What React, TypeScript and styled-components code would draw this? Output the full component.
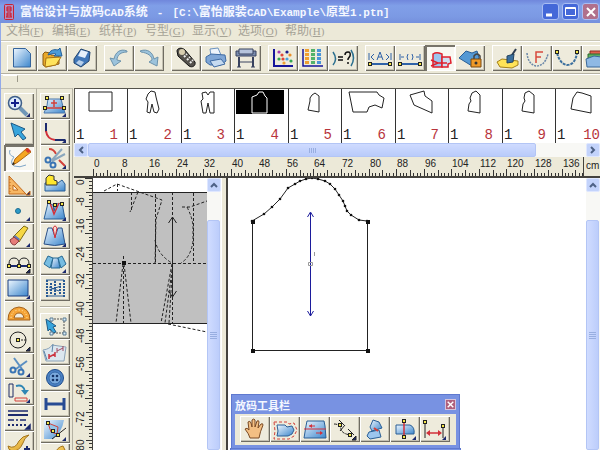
import React from 'react';
import styled, { createGlobalStyle, css } from 'styled-components';

const Global = createGlobalStyle`
  * { box-sizing: border-box; }
  body {
    margin: 0;
    overflow: hidden;
    background: #ece9d8;
    font-family: "Liberation Sans", "Noto Sans CJK SC", sans-serif;
    font-size: 12px;
  }
  button { font: inherit; padding: 0; margin: 0; }
`;

const face = '#ece9d8';
const navy = '#1c2a6e';

/* ---------- frame ---------- */

const Window = styled.div`
  display: flex;
  flex-direction: column;
  height: 100vh;
  overflow: hidden;
  background: ${face};
`;

const TitleBar = styled.header`
  display: flex;
  align-items: center;
  flex: none;
  height: 23px;
  padding: 0 1px 0 4px;
  gap: 6px;
  background: linear-gradient(#7087dc, #809fe8 25%, #7c9ae4 70%, #7590dd);
`;

const Title = styled.h1`
  display: flex;
  align-items: baseline;
  flex: 1;
  gap: 9px;
  margin: 0;
  overflow: hidden;
  white-space: nowrap;
  color: #f4f7ff;
  font: bold 12px/18px "Noto Sans CJK SC", sans-serif;
`;

const Mono = styled.span`
  font-family: "Liberation Mono", monospace;
  font-size: 11px;
`;

const Caption = styled.div`
  display: flex;
  gap: 3px;
`;

const CaptionButton = styled.button<{ $close?: boolean }>`
  display: grid;
  place-items: center;
  width: 17px;
  height: 17px;
  border: 1px solid #a9bdf3;
  border-radius: 3px;
  background: ${p => (p.$close ? '#b0708c' : '#4468d8')};
`;

const Client = styled.div`
  display: flex;
  flex-direction: column;
  flex: 1;
  min-height: 0;
  border-left: 1px solid #93aaea;
`;

const MenuBar = styled.nav`
  display: grid;
  grid-auto-flow: column;
  grid-auto-columns: 46px 47px;
  justify-content: start;
  flex: none;
  height: 18px;
  padding-left: 5px;
  border-bottom: 1px solid #c9c6b6;
`;

const MenuItem = styled.button`
  border: 0;
  background: none;
  text-align: left;
  white-space: nowrap;
  color: #a5a296;
  font: 12px/17px "Liberation Serif", "Noto Sans CJK SC", serif;
`;

const Key = styled.span`
  font-size: 11px;
`;

const ToolBar = styled.div`
  display: flex;
  flex: none;
  gap: 7px;
  height: 33px;
  padding: 3px 0 0 6px;
  overflow: hidden;
  border-top: 1px solid #fff;
  border-bottom: 1px solid #b4b1a2;
`;

const Group = styled.div`
  display: flex;
  flex: none;
`;

const ToolButton = styled.button<{ $on?: boolean }>`
  display: block;
  flex: none;
  width: 30px;
  height: 26px;
  border: 0;
  background: ${p => (p.$on ? '#f8f7f1' : '#eeebdc')};
  box-shadow: ${p =>
    p.$on
      ? 'inset 2px 2px 0 #77746a, inset -1px -1px 0 #fff'
      : 'inset 1px 1px 0 #fff, inset -1px -1px 0 #6f6c62, inset -2px -2px 0 #c4c1b2'};
  svg { display: block; }
`;

const DockStrip = styled.div`
  flex: none;
  height: 14px;
  padding-left: 2px;
  border-top: 1px solid #fff;
`;

const DockHandle = styled.div`
  width: 15px;
  height: 7px;
  border-right: 1px solid #9c998a;
  border-top: 1px solid #fff;
`;

const Body = styled.div`
  display: flex;
  flex: 1;
  min-height: 0;
`;

const ToolColumn = styled.div`
  display: flex;
  flex-direction: column;
  flex: none;
  padding: 4px 2px 0 3px;
  overflow: hidden;
  border-right: 1px solid #b4b1a2;
  border-top: 1px solid #c4c1b2;
`;

const ColumnRule = styled.hr`
  flex: none;
  width: 30px;
  height: 2px;
  margin: 5px 0;
  border: 0;
  border-top: 1px solid #b4b1a2;
  border-bottom: 1px solid #fff;
`;

const Workspace = styled.main`
  display: flex;
  flex-direction: column;
  flex: 1;
  min-width: 0;
  padding-left: 1px;
`;

/* ---------- piece list ---------- */

const PieceList = styled.div`
  display: grid;
  grid-auto-flow: column;
  grid-auto-columns: 53px 54px;
  flex: none;
  height: 55px;
  overflow: hidden;
  border-top: 1px solid #55534c;
  border-left: 1px solid #55534c;
  background: #fff;
`;

const Piece = styled.button`
  display: flex;
  flex-direction: column;
  justify-content: space-between;
  border: 0;
  border-right: 1px solid #333;
  background: #fff;
`;

const PieceNumbers = styled.span`
  display: flex;
  justify-content: space-between;
  width: 100%;
  padding: 0 9px 0 1px;
  color: #222;
  font: 14px/16px "Liberation Mono", monospace;
`;

const Index = styled.span`
  color: #b8343c;
`;

/* ---------- scroll bars ---------- */

const Scroll = styled.div<{ $vertical?: boolean }>`
  display: flex;
  flex: none;
  flex-direction: ${p => (p.$vertical ? 'column' : 'row')};
  ${p => (p.$vertical ? 'width: 14px;' : 'height: 14px;')}
  background: #f8f8f5;
`;

const ScrollButton = styled.button`
  display: grid;
  place-items: center;
  flex: none;
  width: 14px;
  height: 14px;
  border: 1px solid #dfe7ff;
  border-radius: 2px;
  background: #c3d3fb;
`;

const Track = styled.div<{ $vertical?: boolean }>`
  display: flex;
  flex: 1;
  min-height: 0;
  ${p => p.$vertical && css`padding-top: 28px;`}
`;

const Thumb = styled.div<{ $vertical?: boolean }>`
  display: grid;
  place-items: center;
  border: 1px solid #b3c5f5;
  border-radius: 2px;
  ${p =>
    p.$vertical
      ? css`width: 13px; flex: none; background: linear-gradient(90deg, #d0dcff, #bccdfb);`
      : css`width: 90%; background: linear-gradient(#cfdbff, #b9cbfa);`}
`;

/* ---------- canvas ---------- */

const RulerRow = styled.div`
  display: flex;
  flex: none;
  height: 21px;
  border-bottom: 2px solid #44423d;
`;

const RulerScale = styled.div`
  flex: 1;
  min-width: 0;
  overflow: hidden;
`;

const Unit = styled.div`
  flex: none;
  width: 17px;
  padding: 3px 0 0 2px;
  border-left: 1px solid #44423d;
  font: 10px/12px "Liberation Sans", sans-serif;
  color: #222;
`;

const Views = styled.div`
  display: flex;
  flex: 1;
  min-height: 0;
`;

const SideRuler = styled.div`
  flex: none;
  width: 19px;
  overflow: hidden;
  border-right: 1px solid #44423d;
`;

const LeftView = styled.section`
  flex: none;
  overflow: hidden;
  background: #fff;
  svg { display: block; }
`;

const Splitter = styled.div`
  flex: none;
  width: 5px;
  border-left: 1px solid #fff;
  background: ${face};
`;

const RightView = styled.section`
  position: relative;
  flex: 1;
  min-width: 0;
  overflow: hidden;
  border-left: 2px solid #44423d;
  background: #fff;
`;

const Palette = styled.div<{ $next?: boolean }>`
  position: absolute;
  left: ${p => (p.$next ? 2 : 3)}px;
  top: ${p => (p.$next ? 270 : 216)}px;
  padding: 0 3px 3px;
  border: 1px solid #5f79cf;
  background: #7892e2;
  ${p => p.$next && css`width: 231px; height: 20px;`}
`;

const PaletteHead = styled.div`
  display: flex;
  align-items: center;
  justify-content: space-between;
  height: 19px;
  color: #f4f7ff;
  font: bold 11px/18px "Noto Sans CJK SC", sans-serif;
`;

const PaletteClose = styled.button`
  display: grid;
  place-items: center;
  width: 11px;
  height: 11px;
  border: 1px solid #d5c4dc;
  background: #b0607c;
`;

const PaletteTools = styled.div`
  display: flex;
  padding: 2px 6px 3px 5px;
  background: ${face};
`;

/* ---------- icons ---------- */

const B = 'url(#blue)';
const Y = 'url(#gold)';
const corner = <path d="M26 20v4h-4z" fill={navy} />;
const node = (x: number, y: number) => (
  <rect key={`${x}-${y}`} x={x - 1.5} y={y - 1.5} width="3" height="3" fill="#f7e84a" stroke="#222" />
);
const scissors = (
  <g fill="none" stroke="#3a74b4" strokeWidth="2">
    <path d="M10 5l8 11M23 8l-11 8" stroke="#5b8fc2" />
    <circle cx="9" cy="17" r="2.5" />
    <circle cx="17" cy="19" r="2.5" />
  </g>
);

const art: Record<string, React.ReactNode> = {
  New: <path d="M6.500 3.500h12l5 5v13.500h-17z" fill={B} stroke="#35649c" />,
  Open: (
    <g strokeLinejoin="round">
      <path d="M6 9l2-2 5 1 1 2 8 1v8L9 22 6 20z" fill="#e9a92a" stroke="#8a5a10" />
      <path d="M9 13l15-1-5 8L8 22z" fill="#ffe35c" stroke="#a87314" />
      <path d="M11 10c2-5 6-6 10-5l2-2 2 8-8 0 2-2c-3-1-5 0-8 1z" fill="#4b9cd8" stroke="#235f9a" />
    </g>
  ),
  Save: (
    <g>
      <path d="M7 14l7-10 9 3-1 9-8 6-7-4z" fill="#4077b8" stroke="#23456f" />
      <path d="M14 5l7 2-3 6-7-2z" fill="#e6f0fa" />
      <path d="M12 15l5 2-3 4-5-3z" fill="#b8d0ea" />
    </g>
  ),
  Undo: <path d="M23 6C16 3 11 8 10 14l-4-1 4 8 7-5-4-1c0-5 4-8 10-8z" fill="#9cc3dc" stroke="#6d93ac" />,
  Redo: <path d="M6 6c8-3 13 2 14 8l4-2-1 9-8-4 3-2c0-4-4-7-11-8z" fill="#9cc3dc" stroke="#6d93ac" />,
  Measure: (
    <g>
      <path d="M6 6c0-3 5-4 8-1l10 12c1 4-3 6-6 4L7 11z" fill="#55524d" stroke="#111" />
      <circle cx="11" cy="7" r="3" fill="#d8ceb0" />
      <path d="M13 12l3-3M16 15l3-3M19 18l3-3" stroke="#eee" strokeWidth="2" strokeDasharray="2 1" />
    </g>
  ),
  Print: (
    <g>
      <path d="M10 11l-1-7 8-1 3 7z" fill="#eef4fb" stroke="#6c93bf" />
      <path d="M5 12l5-3 14 1 1 6-5 4H9l-4-3z" fill="#7fa6d6" stroke="#3f6ba3" />
      <path d="M9 16l11-2 4 5-11 3z" fill="#c6dbf0" stroke="#3f6ba3" />
    </g>
  ),
  Plot: (
    <g stroke="#38425e">
      <path d="M5 6h20v5H5z" fill="#7a8db0" />
      <path d="M8 4h14v5H8z" fill="#b6c4dc" />
      <path d="M8 12v10M22 12v10" strokeWidth="2" />
      <path d="M8 17h14M6 22h4M20 22h4" />
    </g>
  ),
  Points: (
    <g>
      <path d="M6 4v17h19" fill="none" stroke="#15159a" strokeWidth="2" />
      {[[11, 7, '#a33bb0'], [19, 7, '#1b1b8a'], [14, 10, '#e0483c'], [22, 10, '#e9902a'], [11, 14, '#32a852'], [15, 14, '#e0483c'], [19, 14, '#4aa3e0'], [16, 18, '#f0a030'], [23, 16, '#32a852']].map(
        ([x, y, c]) => <circle key={`${x}-${y}`} cx={x} cy={y} r="1.600" fill={c as string} />,
      )}
    </g>
  ),
  Table: (
    <g>
      <path d="M5 4v17h20" fill="none" stroke="#15159a" strokeWidth="1.500" />
      {['#f0a030', '#53b26a', '#4a94d8'].map((c, i) => (
        <path key={c} d={`M${9 + i * 6} 4v15`} stroke={c} strokeWidth="4" strokeDasharray="3 1" />
      ))}
    </g>
  ),
  Formula: (
    <g fill="none">
      <path d="M5 7q5 7 0 13M23 5q5 8 0 16" stroke="#2b6f8f" strokeWidth="1.500" />
      <path d="M10 12h5M10 15h5M17 10q0-3 3-3t2 4l-2 3v1M20 17v2" stroke="#111" strokeWidth="1.500" />
    </g>
  ),
  Width: (
    <g stroke="#2f62a8" fill="none">
      <path d="M4 8v7M26 8v7M6 12l3-3M6 12l3 3M24 12l-3-3M24 12l-3 3M12 15l3-8 3 8M13 12h4" />
      <path d="M5 19h20" strokeWidth="2" />
      {node(5, 19)}{node(25, 19)}
    </g>
  ),
  Gap: (
    <g stroke="#2f62a8" fill="none">
      <path d="M5 9v6M25 9v6M6 12h3M21 12h3M13 9q-2 3 0 6M17 9q2 3 0 6" />
      <path d="M5 19h20" strokeWidth="2" />
      {node(5, 19)}{node(25, 19)}
    </g>
  ),
  Sleeve: (
    <g stroke="#e0202c" strokeWidth="1.500">
      <path d="M8 22V9q3-2 6-1l3 1v13z" fill="#9cc6ee" />
      <path d="M17 22v-10h8l1 6-3 1v3z" fill="#cfe0f2" />
      <path d="M6 15l7 3-7 3M13 18h9" fill="none" />
    </g>
  ),
  Lock: (
    <g>
      <path d="M4 13L11 6l6 2 5-2 2 7-7 8z" fill="#5599d4" stroke="#2a5f96" />
      <path d="M19 14v-3q3-4 6 0v3" fill="none" stroke="#444" strokeWidth="1.500" />
      <path d="M16 14h10v8H16z" fill="#f09a28" stroke="#7a4a10" />
      <circle cx="21" cy="18" r="1.500" fill="#333" />
    </g>
  ),
  Brush: (
    <g>
      <path d="M5 17l5-3 8 1 8 1v4l-6 3-12-1z" fill="#ffe357" stroke="#a4801a" />
      <path d="M24 4l-4 6" stroke="#2e3d50" strokeWidth="2" />
      <path d="M15 11l7-2-1 8-6 1z" fill="#3a6f9e" stroke="#23425f" />
    </g>
  ),
  Notch: (
    <g fill="none" strokeWidth="1.500">
      <path d="M5 8q1 11 9 13 9 0 12-12" stroke="#6a87a8" strokeDasharray="2 1" />
      <path d="M14 18V7h7M14 12h5" stroke="#d84a3c" />
    </g>
  ),
  Curve: (
    <g fill="none" stroke="#333">
      <path d="M5 8q3 11 10 12 8 0 10-12" stroke="#3a6f9e" strokeWidth="2" strokeDasharray="3 1" />
      {node(5, 7)}{node(25, 7)}
    </g>
  ),
  Layers: (
    <g>
      <path d="M8 6h18v7H8z" fill="#e2604c" stroke="#8a2f22" />
      <path d="M6 9h20v8H6z" fill="#5fae62" stroke="#2c6a30" />
      <path d="M4 14l8-3 14 2v9H5z" fill="#8fb9e4" stroke="#3a689a" />
    </g>
  ),
  Zoom: (
    <g>
      <path d="M16 15l7 7" stroke="#6f96b8" strokeWidth="4" />
      <circle cx="11" cy="10" r="6.500" fill="#dcebfb" stroke="#3f5f8a" strokeWidth="1.500" />
      <path d="M11 6v8M7 10h8" stroke="#111f8a" strokeWidth="2" />
      {corner}
    </g>
  ),
  Select: <path d="M7 4l14 6-4 3 5 6-3 2-5-6-3 3z" fill="#38a5dc" stroke="#1e5a86" />,
  Pencil: (
    <g>
      <path d="M6 5q-2 5 4 7-5 6 0 9 6 2 12-1" fill="none" stroke="#7fa6c8" />
      <path d="M23 3l4 4-13 10-5 3 2-6z" fill="#f4a621" stroke="#b0660f" />
      <path d="M24 3l3 3-3 2-3-3z" fill="#d83a2c" />
      <path d="M8 20l1-3 2 2z" fill="#222" />
    </g>
  ),
  SetSquare: (
    <g fill="none" stroke="#c26a1c">
      <path d="M5 5l17 18H5z" fill="#f7b765" />
      <path d="M9 14l5 5H9z" fill="#fff3de" />
      <path d="M6 8v14" strokeDasharray="1 2" />
      {corner}
    </g>
  ),
  Point: <g><circle cx="14" cy="14" r="2.500" fill="#2c9bc8" stroke="#1d6d92" />{corner}</g>,
  Eraser: (
    <g>
      <path d="M9 14L20 3l4 2-9 14z" fill="#f6d743" stroke="#7c6a18" />
      <path d="M11 12l5 4-2 3-5-4z" fill="#5d79c0" />
      <path d="M6 17l4-3 5 4-4 4q-4 0-5-5z" fill="#e67c78" stroke="#8c3c40" />
      {corner}
    </g>
  ),
  Divide: (
    <g fill="none" stroke="#222">
      <path d="M5 15q0-6 5-6t5 6q0-6 5-6t5 6" />
      <path d="M5 17h20" stroke={navy} strokeWidth="2" />
      {node(5, 17)}{node(15, 17)}{node(25, 17)}{corner}
    </g>
  ),
  Rect: <g><path d="M4 5h20v16H4z" fill={B} stroke="#1a3f80" />{corner}</g>,
  Protractor: (
    <g>
      <path d="M4 19q0-12 11-13 11 1 11 13z" fill="#f5a437" stroke="#a3601a" />
      <path d="M10 17q1-5 5-5t5 5z" fill="#f1eee0" stroke="#a3601a" />
      <path d="M7 17q1-8 8-8t8 8" fill="none" stroke="#fff0c0" strokeDasharray="1 2" />
    </g>
  ),
  Circle: (
    <g fill="none" stroke="#222">
      <circle cx="14" cy="13" r="8" />
      <path d="M14 13h8" strokeDasharray="2 1" />
      {node(14, 13)}{corner}
    </g>
  ),
  Cut: <g>{scissors}{corner}</g>,
  Rotate: (
    <g fill="none">
      <path d="M5 5h4v13H5z" stroke="#1e2d66" />
      <path d="M11 19h12v3H11z" stroke="#d2403a" />
      <path d="M12 7q8-2 9 6" stroke="#2f86b4" strokeWidth="2" />
      <path d="M17 11h8l-4 5z" fill="#2f86b4" />
      {corner}
    </g>
  ),
  Lines: (
    <g stroke={navy} strokeWidth="1.500">
      <path d="M4 6h20" /><path d="M4 10h20" strokeWidth="2" />
      <path d="M4 15h20" strokeDasharray="6 2 2 2" />
      <path d="M4 20h18" strokeWidth="2" strokeDasharray="2 2" />
      {corner}
    </g>
  ),
  Hem: (
    <g>
      <path d="M4 15q7 4 11-5 3-5 10-6-5 3-6 8-4 9-11 8-4-1-4-5z" fill={Y} stroke="#a5751c" />
      <path d="M20 18h6M23 15v6" stroke={navy} strokeWidth="2" />
    </g>
  ),
  Piece: (
    <g>
      <path d="M8 6h13q2 8 4 14H4Q8 12 8 6z" fill={B} stroke="#4a77ad" />
      <path d="M7 15h16M14 7v7M11 10h6" stroke="#d2403a" strokeWidth="1.500" />
      {node(7, 5)}{node(22, 5)}{node(5, 15)}{node(24, 15)}{corner}
    </g>
  ),
  Corner: (
    <g fill="none" strokeWidth="2">
      <path d="M6 4v9M15 21h10" stroke={navy} /><path d="M6 12q1 8 9 9" stroke="#d2303a" />{corner}
    </g>
  ),
  CutPiece: (
    <g>
      <path d="M9 4q5 0 7 5M19 15l6 6" fill="none" stroke="#d2403a" strokeWidth="2" />
      <g fill="none" stroke="#3a74b4" strokeWidth="2">
        <path d="M22 4L12 15M25 9L12 16" stroke="#8ba7bd" />
        <circle cx="8" cy="15" r="2.500" />
        <circle cx="13" cy="20" r="2.500" />
      </g>
      {corner}
    </g>
  ),
  Seam: (
    <g>
      <path d="M5 12h13l4-3 3 4v7H5z" fill={B} stroke="#2a5f96" />
      <path d="M6 14V7l3-3 5 1v4l3 1v4z" fill="#ffe72e" stroke="#333" />
    </g>
  ),
  Dart: (
    <g>
      <path d="M8 6l5 2 1 6 2-7 6-1 3 16H4z" fill={B} stroke="#2a5f96" />
      <path d="M10 6l4 11 5-11" fill="none" stroke="#d2303a" strokeWidth="1.500" />
      {node(9, 5)}{node(15, 8)}{node(22, 7)}{corner}
    </g>
  ),
  DartClose: (
    <g>
      <path d="M8 5h4l3 9 3-9h4l3 16q-10 3-21 0z" fill={B} stroke="#2a4f86" />
      <path d="M13 5q2-4 4 0l-2 10z" fill="#f7dcd4" stroke="#d2303a" />
      {corner}
    </g>
  ),
  Flare: (
    <g strokeLinejoin="round">
      <path d="M4 15l4-8 5 2-3 10z" fill="#77bde2" stroke="#276a94" />
      <path d="M13 9h5l2 10h-9z" fill={B} stroke="#276a94" />
      <path d="M18 9l4-2 4 8-5 4z" fill="#77bde2" stroke="#276a94" />
      {corner}
    </g>
  ),
  Pleat: (
    <g stroke="#285a94" strokeWidth="2" fill="none">
      <path d="M7 5v17M24 5v17M11 8v12M15 6v15M20 8v12" strokeDasharray="2 1" />
      <path d="M6 5h18M6 21h18M9 12l10 4M9 15l12-4" strokeWidth="1" />
    </g>
  ),
  Modify: (
    <g fill="none" stroke="#555">
      <path d="M11 6h13v14H11z" strokeDasharray="2 1" />
      <path d="M6 6l10 7-3 1 3 5-3 1-3-4-2 2z" fill="#38a5dc" stroke="#1e5a86" />
      <path d="M10 5h3v3h-3zM23 5h3v3h-3zM10 19h3v3h-3zM23 19h3v3h-3z" fill="#d7ecf8" stroke="#5a7a92" />
    </g>
  ),
  Grain: (
    <g>
      <path d="M3 11q7-1 9-5l14 2-2 14H6z" fill="#dce7ef" stroke="#8aa2b8" />
      <path d="M13 5l-1 8M4 12l3 9" stroke="#5e86aa" fill="none" />
      <path d="M9 18l6-3M9 15v5M15 13v5" stroke="#cc3542" strokeWidth="1.500" />
      <path d="M17 12l6-3M17 9v5M23 7v5" stroke="#a04a60" />
    </g>
  ),
  Button: (
    <g>
      <circle cx="15" cy="13" r="8.500" fill="#4b82c4" stroke="#1d4b8c" />
      <circle cx="15" cy="13" r="6" fill="#79a9dc" stroke="#3568a8" />
      {[[13, 11], [17, 11], [13, 15], [17, 15]].map(([x, y]) => <circle key={`${x}${y}`} cx={x} cy={y} r="1.300" fill="#143468" />)}
    </g>
  ),
  Buttonhole: <path d="M6 7v12M24 7v12M6 13h18" stroke="#274b94" strokeWidth="3" />,
  Fill: (
    <g>
      <path d="M4 3h20q-2 12-11 19H4z" fill={B} />
      <path d="M8 6l10 4-1 7-6-2z" fill="#94c6ea" stroke="#d2403a" />
      <path d="M12 22l14-11" stroke="#222" />
      {node(8, 6)}{node(13, 14)}{node(18, 18)}{corner}
    </g>
  ),
  Ribbon: <path d="M4 20q8 0 11-9 2-7 8-8l2 4q-5 1-7 8-3 9-10 10z" fill={Y} stroke="#a5751c" />,
  Hand: (
    <path
      d="M10 22q-1-4-5-9 2-2 4 1L8 6q2-2 3 1l1 4V4q2-2 3 0v7l2-6q2-1 2 1l-1 6 3-4q2-1 2 1-3 7-4 13z"
      fill="#f3bf83" stroke="#7a4a24" strokeLinejoin="round"
    />
  ),
  Offset: (
    <g>
      <path d="M7 9h8l2 2 5-1 2 4-2 4-4 2H7l1-5z" fill={B} stroke="#2a5f96" />
      <path d="M4 6h13l2 2 5-1 3 7-3 6-5 3H4l1-8z" fill="none" stroke="#d2403a" strokeDasharray="3 2" />
    </g>
  ),
  Grade: (
    <g>
      <path d="M7 5h17l1 5 1 12H4L6 10z" fill={B} stroke="#2a5f96" />
      <path d="M4 13h22M9 10h6M16 17h6" stroke="#d2303a" />
      <path d="M12 8v4l-3-2zM20 15v4l3-2z" fill="#d2303a" />
    </g>
  ),
  CurvePts: (
    <g fill="none" stroke="#222">
      <path d="M4 8q6 0 7 5t10 6" strokeDasharray="3 1" />
      <path d="M9 4l5 5M15 9l-5 6M18 13l6 6" />
      {node(10, 9)}{node(20, 19)}{corner}
    </g>
  ),
  Mirror: (
    <g stroke="#2a5f96">
      <path d="M13 4l6 2 3 6-10 3-2-4z" fill={B} />
      <path d="M9 16l10-2 2 7-11 2-3-3z" fill="#9cc6ee" />
      <path d="M14 12l4 3" stroke="#d2403a" strokeWidth="2" />
    </g>
  ),
  Align: (
    <g>
      <path d="M6 9h14q5 2 4 9H6z" fill={B} stroke="#2a5f96" />
      <path d="M14 5v17" stroke="#d2303a" strokeWidth="1.500" />
      {node(14, 5)}{node(14, 21)}{corner}
    </g>
  ),
  Distance: (
    <g>
      <path d="M5 6v16M23 10v12" stroke="#222" />
      <path d="M8 17h12" stroke="#d2303a" strokeWidth="1.500" />
      <path d="M10 14v6l-4-3zM18 14v6l4-3z" fill="#d2303a" />
      {node(5, 6)}{node(23, 10)}{corner}
    </g>
  ),
};

function Tool({ name, on }: { name: string; on?: boolean }) {
  return (
    <ToolButton type="button" aria-label={name} aria-pressed={on} $on={on}>
      <svg width="30" height="26" viewBox="0 0 30 26" aria-hidden="true">{art[name]}</svg>
    </ToolButton>
  );
}

/* ---------- data ---------- */

const menus = [['文档', 'F'], ['编辑', 'E'], ['纸样', 'P'], ['号型', 'G'], ['显示', 'V'], ['选项', 'O'], ['帮助', 'H']];

const topTools = [
  ['New', 'Open', 'Save'],
  ['Undo', 'Redo'],
  ['Measure', 'Print', 'Plot'],
  ['Points', 'Table', 'Formula'],
  ['Width', 'Gap', 'Sleeve', 'Lock'],
  ['Brush', 'Notch', 'Curve', 'Layers'],
];
const drawTools = ['Zoom', 'Select', 'Pencil', 'SetSquare', 'Point', 'Eraser', 'Divide', 'Rect', 'Protractor', 'Circle', 'Cut', 'Rotate', 'Lines', 'Hem'];
const pieceTools = ['Piece', 'Corner', 'CutPiece', 'Seam', 'Dart', 'DartClose', 'Flare', 'Pleat'];
const markTools = ['Modify', 'Grain', 'Button', 'Buttonhole', 'Fill', 'Ribbon'];
const gradeTools = ['Hand', 'Offset', 'Grade', 'CurvePts', 'Mirror', 'Align', 'Distance'];

const pieces = [
  '14,3 37,3 37,22 14,22',
  '20,5 23,2 27,3 28,8 29,12 31,20 29,24 26,23 24,15 22,24 19,23 20,13 18,10',
  '20,4 24,3 26,6 28,3 32,3 32,24 28,24 26,14 24,24 21,24 19,12 21,10',
  '17,24 17,8 22,6 24,3 28,3 30,7 32,9 32,24',
  '19,21 21,12 21,9 23,6 26,4 30,7 30,23',
  '7,3 35,3 37,6 42,9 40,19 33,16 27,18 25,23 11,23',
  '14,6 28,2 29,7 36,12 36,24 18,16',
  '23,4 27,2 31,6 31,24 19,22 20,15 22,12 21,9',
  '22,4 26,2 31,6 31,24 19,22 20,15 22,12 21,9',
  '17,9 21,3 26,4 35,7 35,24 15,20',
];

const UNIT = 3.445;

function Ruler({ vertical, last }: { vertical?: boolean; last: number }) {
  const start = vertical ? 0 : 19;
  const edge = vertical ? 18 : 19;
  const ticks = Array.from({ length: 400 }, (_, i) => {
    const at = Math.round(start + i * UNIT) + 0.5;
    const len = i % 8 === 0 ? 7 : i % 4 === 0 ? 6 : 3;
    return vertical ? `M${edge} ${at}h${-len}` : `M${at} ${edge}v${-len}`;
  }).join('');
  const labels = Array.from({ length: last / 8 + 1 }, (_, i) => i * 8);
  return (
    <svg
      width={vertical ? 18 : 1400}
      height={vertical ? 1400 : 19}
      fontFamily="Liberation Sans, sans-serif"
      fontSize="10"
      fill="#222"
      display="block"
    >
      <path d={ticks} stroke="#333" />
      {labels.map(v => {
        const at = Math.round(start + v * UNIT);
        return vertical ? (
          <text key={v} transform={`translate(10 ${Math.max(at, 7)}) rotate(-90)`}>{-v || 0}</text>
        ) : (
          <text key={v} x={at + 1} y="10">{v}</text>
        );
      })}
    </svg>
  );
}

const Chevron = ({ d }: { d: string }) => (
  <svg width="8" height="8" viewBox="0 0 8 8" fill="none" stroke="#4d6185" strokeWidth="2"><path d={d} /></svg>
);

const Grip = ({ vertical }: { vertical?: boolean }) => (
  <svg width="7" height="7" viewBox="0 0 7 7" stroke="#98aee0">
    <path d={vertical ? 'M0 .5h7M0 2.500h7M0 4.500h7M0 6.500h7' : 'M.5 1v5M2.500 1v5M4.500 1v5M6.500 1v5'} />
  </svg>
);

const Cross = ({ size }: { size: number }) => (
  <svg width={size} height={size} viewBox="0 0 10 10" stroke="#fff" strokeWidth="2"><path d="M1 1l8 8M9 1L1 9" /></svg>
);

const sleeve: [number, number][] = [
  [252, 221], [264, 214], [272, 207], [280, 199], [288, 188], [295, 184], [300, 181], [306, 179], [312, 178],
  [318, 179], [325, 181], [330, 184], [335, 189], [339, 195], [343, 201], [345, 206], [347, 211], [351, 215],
  [359, 220], [367, 221],
];

function BodiceDrawing() {
  return (
    <svg width="114" height="272" viewBox="93 178 114 272">
      <path d="M92 192.500h116v131H92z" fill="#c0c0c0" stroke="#222" />
      <g fill="none" stroke="#222" strokeDasharray="3 2">
        <path d="M93 263.500h114M104 191l13-7 45 16-6 19-1 45M117.500 184v7" />
        <path d="M155.500 194v69M193.500 193v70M131.500 192v20M138 192l-8 20" />
        <path d="M172.500 192v131M182 207h8l17-6M187 207q6 12 6 20v14q-2 16-12 22" />
        <path d="M155 240q3 15 17 23" />
        <path d="M123.500 256v67M123 264l-7 59M124 264l7 59M172 264l-11 59M172 270l-7 53M172 275l-3 48M168 324l39 8" />
      </g>
      <path d="M172.500 218v78M168.500 223l4-6 4 6M168.500 291l4 6 4-6" fill="none" stroke="#222" />
      <path d="M122 261h4v4h-4z" fill="#111" />
    </svg>
  );
}

function SleeveDrawing() {
  return (
    <svg width="150" height="180" viewBox="228 178 150 180" display="block">
      <path d={`M${sleeve.map(p => p.join(' ')).join('L')}`} fill="none" stroke="#222" />
      <path d="M252.500 221v129.500h115V221" fill="none" stroke="#222" />
      {sleeve.map(([x, y]) => <circle key={x} cx={x} cy={y} r="1.300" fill="#111" />)}
      {[[252, 221], [367, 221], [252, 350], [367, 350]].map(([x, y]) => (
        <rect key={`${x}${y}`} x={x - 1} y={y - 1} width="4" height="4" fill="#111" />
      ))}
      <path d="M310.500 213v103M307.500 217l3-5 3 5M307.500 311l3 5 3-5" fill="none" stroke="#1c1c9c" />
      <path d="M308.500 262.500h4v3h-4zM314.500 252v4" fill="none" stroke="#999" />
    </svg>
  );
}

export default function App() {
  return (
    <Window>
      <Global />
      <TitleBar>
        <svg width="10" height="16" viewBox="0 0 10 16">
          <defs>
            <linearGradient id="blue" x1="0" y1="0" x2="1" y2="1">
              <stop offset="0" stopColor="#eef7ff" /><stop offset="1" stopColor="#3c86cc" />
            </linearGradient>
            <linearGradient id="gold" x1="0" y1="0" x2="1" y2="1">
              <stop offset="0" stopColor="#ffe680" /><stop offset="1" stopColor="#d8961e" />
            </linearGradient>
          </defs>
          <rect x=".5" y=".5" width="9" height="15" rx="1" fill="#b090c4" stroke="#cc2030" />
          <path d="M3 3h4v4H3zM3 5h4M3 9h4M3 13V9M7 9v4M3 11h4M2 13h6" fill="none" stroke="#d01020" />
        </svg>
        <Title>
          <span>富怡设计与放码<Mono>CAD</Mono>系统</span>
          <Mono>-</Mono>
          <span><Mono>[C:\</Mono>富怡服装<Mono>CAD\Example\</Mono>原型<Mono>1.ptn]</Mono></span>
        </Title>
        <Caption>
          <CaptionButton type="button" aria-label="Minimize">
            <svg width="11" height="11"><path d="M1 9h6" stroke="#fff" strokeWidth="3" /></svg>
          </CaptionButton>
          <CaptionButton type="button" aria-label="Maximize">
            <svg width="11" height="11" fill="none" stroke="#fff"><path d="M.5 1.500h10v8H.5zM.5 2.500h10" /></svg>
          </CaptionButton>
          <CaptionButton type="button" aria-label="Close" $close><Cross size={10} /></CaptionButton>
        </Caption>
      </TitleBar>
      <Client>
        <MenuBar>
          {menus.map(([label, key]) => (
            <MenuItem key={key} type="button">{label}<Key>(<u>{key}</u>)</Key></MenuItem>
          ))}
        </MenuBar>
        <ToolBar>
          {topTools.map(group => (
            <Group key={group[0]}>{group.map(n => <Tool key={n} name={n} on={n === 'Sleeve'} />)}</Group>
          ))}
        </ToolBar>
        <DockStrip><DockHandle /></DockStrip>
        <Body>
          <ToolColumn>{drawTools.map(n => <Tool key={n} name={n} on={n === 'Pencil'} />)}</ToolColumn>
          <ToolColumn>
            {pieceTools.map(n => <Tool key={n} name={n} />)}
            <ColumnRule />
            {markTools.map(n => <Tool key={n} name={n} />)}
          </ToolColumn>
          <Workspace>
            <PieceList>
              {pieces.map((points, i) => (
                <Piece key={i} type="button">
                  <svg width="52" height="28" fill="none" stroke={i === 3 ? '#fff' : '#222'}>
                    {i === 3 && <rect x="1" y="1" width="48" height="24" fill="#000" stroke="none" />}
                    <polygon points={points} />
                  </svg>
                  <PieceNumbers><span>1</span><Index>{i + 1}</Index></PieceNumbers>
                </Piece>
              ))}
            </PieceList>
            <Scroll>
              <ScrollButton type="button" aria-label="Scroll left"><Chevron d="M6 1L3 4l3 3" /></ScrollButton>
              <Track><Thumb><Grip /></Thumb></Track>
              <ScrollButton type="button" aria-label="Scroll right"><Chevron d="M2 1l3 3-3 3" /></ScrollButton>
            </Scroll>
            <RulerRow>
              <RulerScale><Ruler last={136} /></RulerScale>
              <Unit>cm</Unit>
            </RulerRow>
            <Views>
              <SideRuler><Ruler vertical last={80} /></SideRuler>
              <LeftView><BodiceDrawing /></LeftView>
              <Scroll $vertical>
                <ScrollButton type="button" aria-label="Scroll up"><Chevron d="M1 6l3-3 3 3" /></ScrollButton>
                <Track $vertical><Thumb $vertical><Grip vertical /></Thumb></Track>
              </Scroll>
              <Splitter />
              <RightView>
                <SleeveDrawing />
                <Palette>
                  <PaletteHead>
                    <span>放码工具栏</span>
                    <PaletteClose type="button" aria-label="Close palette"><Cross size={7} /></PaletteClose>
                  </PaletteHead>
                  <PaletteTools>{gradeTools.map(n => <Tool key={n} name={n} />)}</PaletteTools>
                </Palette>
                <Palette $next />
              </RightView>
              <Scroll $vertical>
                <ScrollButton type="button" aria-label="Scroll up"><Chevron d="M1 6l3-3 3 3" /></ScrollButton>
                <Track $vertical><Thumb $vertical><Grip vertical /></Thumb></Track>
              </Scroll>
            </Views>
          </Workspace>
        </Body>
      </Client>
    </Window>
  );
}
